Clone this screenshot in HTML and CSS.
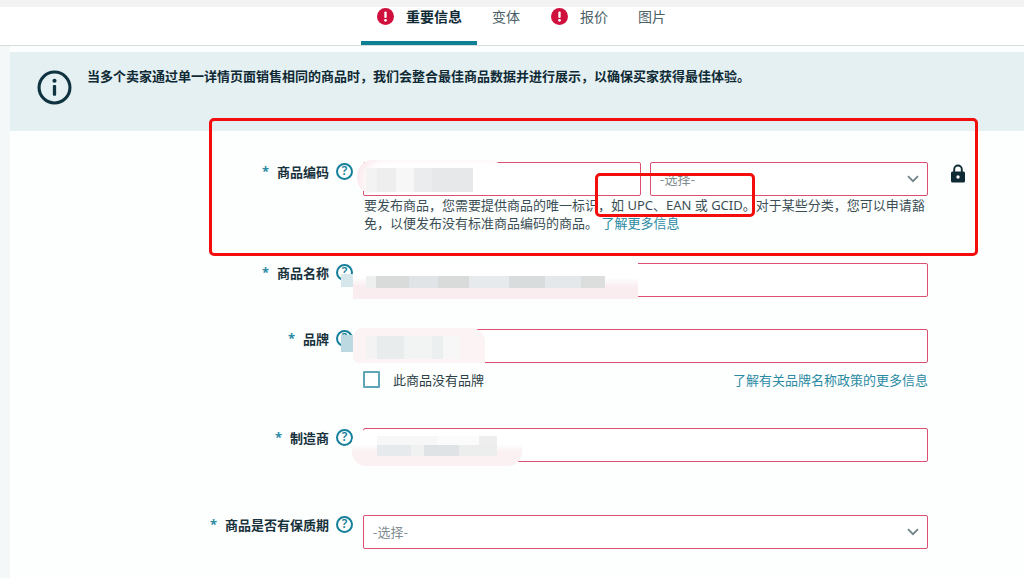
FILE: index.html
```html
<!DOCTYPE html>
<html lang="zh-CN">
<head>
<meta charset="utf-8">
<title>重要信息</title>
<link rel="stylesheet" href="styles.css">
</head>
<body>
<div class="top-strip"></div>
<nav class="tabs">
  <a class="tab tab-active"><svg class="alert" viewBox="0 0 16 16"><circle cx="8" cy="8" r="8" fill="#cf0f3c"/><rect x="6.9" y="3.2" width="2.2" height="6.2" rx="1" fill="#fff"/><circle cx="8" cy="11.6" r="1.3" fill="#fff"/></svg><span>重要信息</span></a>
  <a class="tab tab-variant"><span>变体</span></a>
  <a class="tab tab-offer"><svg class="alert" viewBox="0 0 16 16"><circle cx="8" cy="8" r="8" fill="#cf0f3c"/><rect x="6.9" y="3.2" width="2.2" height="6.2" rx="1" fill="#fff"/><circle cx="8" cy="11.6" r="1.3" fill="#fff"/></svg><span>报价</span></a>
  <a class="tab tab-images"><span>图片</span></a>
</nav>
<div class="page">
  <aside class="rail"></aside>
  <main class="content">
    <section class="banner">
      <svg class="info" viewBox="0 0 34 34"><circle cx="17" cy="17" r="15" fill="none" stroke="#0f3340" stroke-width="3"/><rect x="15.4" y="14.5" width="3.2" height="10.5" rx="1" fill="#0f3340"/><circle cx="17" cy="10.5" r="2" fill="#0f3340"/></svg>
      <p>当多个卖家通过单一详情页面销售相同的商品时，我们会整合最佳商品数据并进行展示，以确保买家获得最佳体验。</p>
    </section>
    <form class="form">
      <div class="row row-code">
        <div class="label"><i>*</i><b>商品编码</b><span class="help">?</span></div>
        <div class="field">
          <div class="pair">
            <div class="input"></div>
            <div class="input select"><span>-选择-</span><svg class="chev" viewBox="0 0 12 8"><path d="M1 1.2l5 5 5-5" fill="none" stroke="#6f8288" stroke-width="1.7"/></svg></div>
          </div>
          <p class="hint">要发布商品，您需要提供商品的唯一标识，如 UPC、EAN 或 GCID。对于某些分类，您可以申请豁免，以便发布没有标准商品编码的商品。 <a>了解更多信息</a></p>
        </div>
        <svg class="lock" viewBox="0 0 16 19"><path d="M4.2 8V5.3a3.8 3.8 0 0 1 7.6 0V8" fill="none" stroke="#0f2a35" stroke-width="1.9"/><rect x="1" y="7.5" width="14" height="11" rx="1.6" fill="#0f2a35"/><circle cx="8" cy="13" r="1.7" fill="#fff"/></svg>
      </div>
      <div class="row row-name">
        <div class="label"><i>*</i><b>商品名称</b><span class="help">?</span></div>
        <div class="field"><div class="input"></div></div>
      </div>
      <div class="row row-brand">
        <div class="label"><i>*</i><b>品牌</b><span class="help">?</span></div>
        <div class="field">
          <div class="input"></div>
          <div class="brand-extra">
            <label class="check"><span class="box"></span>此商品没有品牌</label>
            <a>了解有关品牌名称政策的更多信息</a>
          </div>
        </div>
      </div>
      <div class="row row-maker">
        <div class="label"><i>*</i><b>制造商</b><span class="help">?</span></div>
        <div class="field"><div class="input"></div></div>
      </div>
      <div class="row row-shelf">
        <div class="label"><i>*</i><b>商品是否有保质期</b><span class="help">?</span></div>
        <div class="field"><div class="input select"><span>-选择-</span><svg class="chev" viewBox="0 0 12 8"><path d="M1 1.2l5 5 5-5" fill="none" stroke="#6f8288" stroke-width="1.7"/></svg></div></div>
      </div>
    </form>
  </main>
</div>

<div class="smear smear-code"></div>
<div class="tiles tiles-code"></div>
<div class="smear smear-name"></div>
<div class="tiles tiles-name"></div>
<div class="smear smear-brand"></div>
<div class="tiles tiles-brand"></div>
<div class="smear smear-maker"></div>
<div class="tiles tiles-maker"></div>
<div class="smudge smudge-name"></div>
<div class="smudge smudge-brand"></div>
<div class="mark mark-large"></div>
<div class="mark mark-small"></div>
</body>
</html>
```
FILE: styles.css
```css
* { box-sizing: border-box; }
html, body { margin: 0; height: 578px; overflow: hidden; background: #fdfefe; }
body { font-family: "Noto Sans", "Noto Sans CJK SC", sans-serif; font-size: 13px; color: #2b3f46; }
p { margin: 0; }
a { color: #2b8ba3; }

.top-strip { height: 7px; background: #f3f3f3; }

.tabs { display: flex; height: 39px; padding-left: 361px; background: #fff; border-bottom: 1px solid #d9dcdc; }
.tab { display: flex; height: 38px; padding-bottom: 19px; align-items: center; font-size: 14px; line-height: 20px; color: #4b5f66; }
.tab-active { width: 116px; padding-left: 16px; gap: 12px; border-bottom: 4px solid #0f7f96; padding-bottom: 15px; color: #0f2a35; font-weight: 700; }
.tab-variant { margin-left: 15px; }
.tab-offer { margin-left: 31px; gap: 12px; }
.tab-images { margin-left: 30px; }
.alert { width: 17px; height: 17px; flex: none; }

.page { display: flex; height: 532px; }
.rail { width: 10px; flex: none; background: #f4f8f9; }
.content { flex: 1; padding-top: 6px; min-width: 0; }

.banner { display: flex; height: 79px; padding: 7px 0 0 27px; gap: 15px; background: #e4f0f2; }
.banner p { font-weight: 700; font-size: 13px; line-height: 34px; color: #0f2a35; }
.info { width: 35px; height: 35px; margin-top: 11px; flex: none; }

.form { display: flex; flex-direction: column; }
.row { display: flex; position: relative; }
.row-code { margin-top: 31px; }
.row-name { margin-top: 31px; }
.row-brand { margin-top: 32px; }
.row-maker { margin-top: 40px; }
.row-shelf { margin-top: 53px; }

.label { display: flex; width: 344px; flex: none; justify-content: flex-end; align-items: center; height: 18px; padding-right: 1px; gap: 7px; }
.label i { margin-right: 1px; font-style: normal; font-weight: 700; color: #2b8ba3; }
.label b { font-weight: 700; color: #17323c; }
.help { display: flex; width: 17px; height: 17px; border: 2px solid #16809a; border-radius: 50%; align-items: center; justify-content: center; font-size: 12px; line-height: 1; font-weight: 600; color: #16809a; }

.field { width: 565px; margin-left: 9px; flex: none; }
.pair { display: flex; gap: 9px; }
.input { display: flex; flex: 1; height: 34px; padding: 0 8px 0 9px; align-items: center; justify-content: space-between; border: 1px solid #dd4f71; border-radius: 2px; background: #fff; }
.field > .input { flex: none; }
.select { padding-bottom: 1px; }
.select span { color: #7f8c90; letter-spacing: 0.2px; }
.chev { width: 12px; height: 8px; }
.hint { padding-left: 1px; line-height: 18px; color: #3b4e55; }
.lock { width: 16px; height: 19px; margin: 2px 0 0 22px; flex: none; }

.brand-extra { display: flex; height: 18px; margin-top: 7px; justify-content: space-between; align-items: center; }
.check { display: flex; align-items: center; gap: 13px; color: #2b3f46; }
.box { width: 17px; height: 17px; border: 2px solid #5fa5b7; border-radius: 1px; background: #fff; }

.smear, .tiles, .smudge { position: absolute; }
.smudge { width: 12px; left: 341px; }
.smudge-name { top: 274px; height: 13px; background: #d6e7ec; }
.smudge-brand { top: 335px; height: 17px; background: #bcd9e1; }

.smear-code { left: 357px; top: 160px; width: 148px; height: 34px; border-radius: 16px; background: #fff; box-shadow: inset 10px 3px 8px -4px #fbe9ed; }
.tiles-code { left: 366px; top: 168px; width: 107px; height: 24px; background: linear-gradient(90deg, #f3f3f3 0 10%, #eeeeee 10% 28%, #f7f7f7 28% 45%, #eaecee 45% 62%, #e6e8ea 62% 100%); }
.smear-name { left: 353px; top: 263px; width: 285px; height: 36px; background: linear-gradient(#ffffff 0 40%, #f9edf0 65% 100%); }
.tiles-name { left: 366px; top: 276px; width: 239px; height: 12px; background: linear-gradient(90deg, #eef0f0 0 4%, #d9dbdb 4% 18%, #e0e4e6 18% 30%, #d9dbdb 30% 43%, #e6eaec 43% 60%, #d9dcdc 60% 75%, #e4e8ea 75% 90%, #dcdede 90% 100%); }
.smear-brand { left: 353px; top: 328px; width: 132px; height: 35px; border-radius: 10px 14px 0 6px; background: #fcf3f5; }
.tiles-brand { left: 366px; top: 336px; width: 94px; height: 23px; background: linear-gradient(90deg, #f3f3f3 0 12%, #e9ecec 12% 40%, #f2f3f3 40% 70%, #ecefef 70% 82%, #f7f7f7 82% 100%); }
.smear-maker { left: 352px; top: 430px; width: 170px; height: 36px; border-radius: 14px; background: linear-gradient(#ffffff 0 40%, #fbf0f2 60% 100%); }
.tiles-maker { left: 377px; top: 436px; width: 120px; height: 20px; background: linear-gradient(90deg, #f7f7f7 0 50%, #fbfbfb 50% 85%, #eeeeee 85% 100%) top / 100% 45% no-repeat, linear-gradient(90deg, #e6eaec 0 28%, #f0f2f2 28% 39%, #dfe3e5 39% 68%, #eceeee 68% 100%) bottom / 100% 55% no-repeat; }

.mark { position: absolute; border: 3px solid #f40d0d; border-radius: 5px; }
.mark-large { left: 209px; top: 118px; width: 769px; height: 138px; }
.mark-small { left: 595px; top: 173px; width: 160px; height: 44px; }
```
